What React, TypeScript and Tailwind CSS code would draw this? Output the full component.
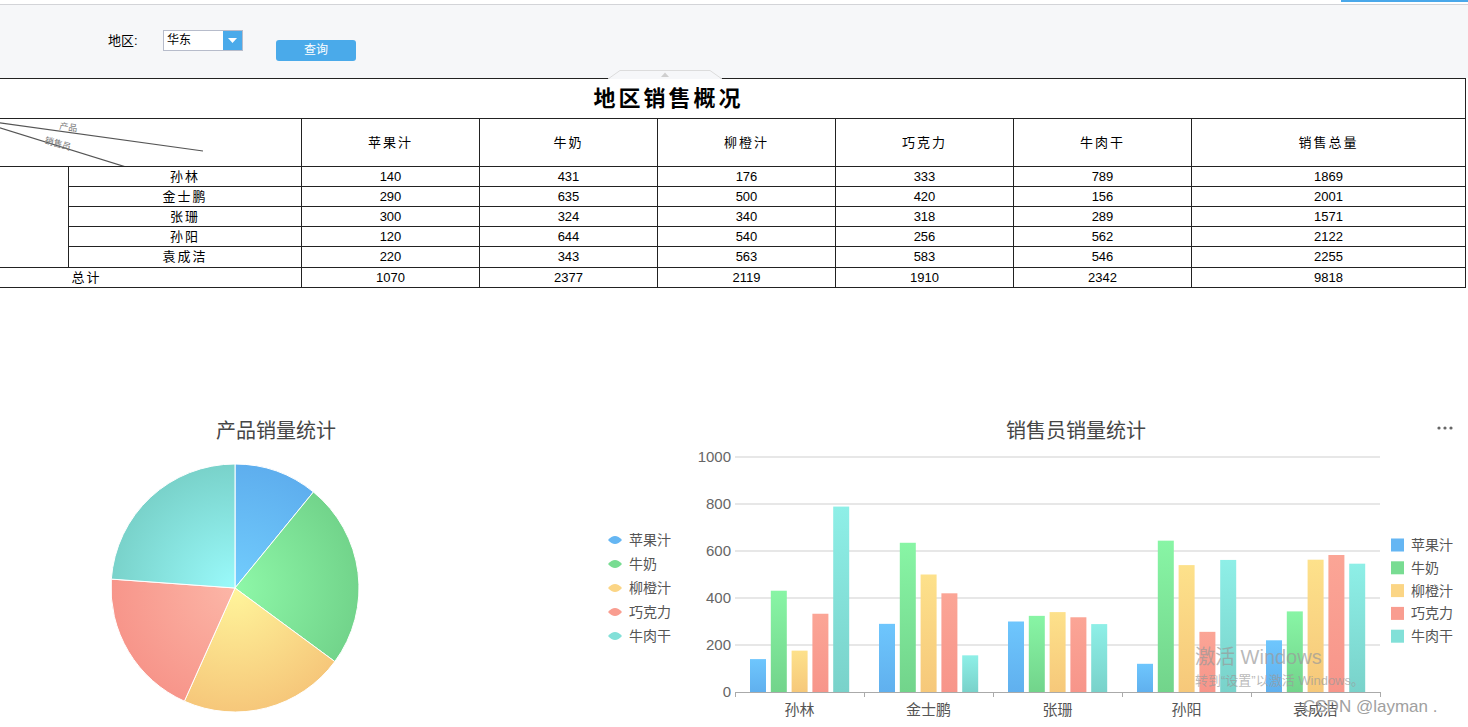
import React from 'react';

const products = ['苹果汁', '牛奶', '柳橙汁', '巧克力', '牛肉干'];
const people = [
  { name: '孙林', v: [140, 431, 176, 333, 789], total: 1869 },
  { name: '金士鹏', v: [290, 635, 500, 420, 156], total: 2001 },
  { name: '张珊', v: [300, 324, 340, 318, 289], total: 1571 },
  { name: '孙阳', v: [120, 644, 540, 256, 562], total: 2122 },
  { name: '袁成洁', v: [220, 343, 563, 583, 546], total: 2255 },
];
const totals = [1070, 2377, 2119, 1910, 2342];

// pie gradient stops: [center, edge]
const pieColors = [
  ['#72cdfd', '#5eaeee'],
  ['#8ef8a8', '#72d48b'],
  ['#fff59b', '#f6c77a'],
  ['#fcb6a7', '#f7958a'],
  ['#9afafb', '#79d2ca'],
];
// bar gradient stops: [top, bottom]
const barColors = [
  ['#6ec6fd', '#60b0ee'],
  ['#88f5a5', '#72d48b'],
  ['#fde18b', '#f6c87a'],
  ['#fba596', '#f7958a'],
  ['#8eefe7', '#79d2ca'],
];
const legendColors = ['#65b6f3', '#78dc92', '#fbd585', '#f99d90', '#82e0d8'];

const FONT = { fontFamily: '"Liberation Sans", "Noto Sans CJK SC", sans-serif' };

function FilterBar() {
  return (
    <div className="relative">
      <div className="h-[4px] bg-white" />
      <div className="h-[74px] bg-[#f6f7f9] border-t border-[#d3d4d8]">
        <div className="flex items-start pl-[108px] pt-[25px]">
          <span className="w-[55px] text-[13px] leading-[21px] text-black">地区:</span>
          <div className="flex w-[80px] h-[21px] border border-[#b7bccb] bg-white">
            <span className="flex-1 pl-[3px] text-[12px] leading-[19px] text-black">华东</span>
            <div className="w-[19px] h-full bg-[#4aaaea] flex items-center justify-center">
              <svg width="9" height="5" viewBox="0 0 9 5">
                <path d="M0 0 L9 0 L4.5 5 Z" fill="#fff" />
              </svg>
            </div>
          </div>
          <button className="ml-[33px] mt-[10px] w-[80px] h-[21px] rounded-[3px] bg-[#4aaaea] text-white text-[12px] leading-[21px]">
            查询
          </button>
        </div>
      </div>
      {/* blue progress strip */}
      <div className="absolute top-0 right-0 w-[127px] h-[2px] bg-[#4aa8ea]" />
      {/* collapse handle */}
      <svg className="absolute left-[608px] top-[69px]" width="114" height="10" viewBox="0 0 114 10">
        <path d="M0 10 L12 1.5 L102 1.5 L114 10" fill="#f6f7f9" stroke="#dcdcdc" />
        <path d="M53 8 L57 3.5 L61 8 Z" fill="#cfcfcf" />
      </svg>
    </div>
  );
}

function SalesTable() {
  const cell = 'border border-[#222] text-center text-[13px] leading-[18px] text-black p-0';
  return (
    <table className="ml-[-129px] w-[1594px] table-fixed border-collapse bg-white">
      <colgroup>
        <col className="w-[197px]" />
        <col className="w-[233px]" />
        <col className="w-[178px]" />
        <col className="w-[178px]" />
        <col className="w-[178px]" />
        <col className="w-[178px]" />
        <col className="w-[178px]" />
        <col className="w-[274px]" />
      </colgroup>
      <tbody>
        <tr className="h-[40px]">
          <td colSpan={8} className={cell + ' text-[22px] leading-[30px] font-bold tracking-[3px]'}>
            地区销售概况
          </td>
        </tr>
        <tr className="h-[48px]">
          <td colSpan={2} className={cell}>
            <div className="relative h-[47px] overflow-hidden">
              <svg className="absolute inset-0" width="430" height="47" viewBox="0 0 430 47">
                <line x1="0" y1="-14" x2="331" y2="32" stroke="#555" strokeWidth="1.2" />
                <line x1="0" y1="-31" x2="254" y2="48" stroke="#555" strokeWidth="1.2" />
                <text x="187" y="10" fontSize="9" fill="#777" transform="rotate(8 187 10)">产品</text>
                <text x="172" y="24" fontSize="9" fill="#777" transform="rotate(16 172 24)">销售员</text>
              </svg>
            </div>
          </td>
          {products.map((p) => (
            <td key={p} className={cell + ' tracking-[2px]'}>{p}</td>
          ))}
          <td className={cell + ' tracking-[2px]'}>销售总量</td>
        </tr>
        {people.map((row, i) => (
          <tr key={row.name} className={i === 4 ? 'h-[21px]' : 'h-[20px]'}>
            {i === 0 && <td rowSpan={5} className={cell} />}
            <td className={cell + ' tracking-[2px]'}>{row.name}</td>
            {row.v.map((n, j) => (
              <td key={j} className={cell}>{n}</td>
            ))}
            <td className={cell}>{row.total}</td>
          </tr>
        ))}
        <tr className="h-[20px]">
          <td colSpan={2} className={cell + ' tracking-[2px]'}>总计</td>
          {totals.map((n, j) => (
            <td key={j} className={cell}>{n}</td>
          ))}
          <td className={cell}>9818</td>
        </tr>
      </tbody>
    </table>
  );
}

function PieChart() {
  const cx = 235;
  const cy = 177;
  const r = 124;
  const sum = totals.reduce((a, b) => a + b, 0);
  let acc = 0;
  const pt = (deg: number) => {
    const rad = (deg * Math.PI) / 180;
    return [cx + r * Math.sin(rad), cy - r * Math.cos(rad)];
  };
  return (
    <svg width="680" height="317" viewBox="0 0 680 317" style={FONT}>
      <defs>
        {pieColors.map((c, i) => (
          <radialGradient key={i} id={`pg${i}`} gradientUnits="userSpaceOnUse" cx={cx} cy={cy} r={r}>
            <stop offset="0" stopColor={c[0]} />
            <stop offset="1" stopColor={c[1]} />
          </radialGradient>
        ))}
      </defs>
      <text x="276" y="27" textAnchor="middle" fontSize="20" fill="#464646">产品销量统计</text>
      {totals.map((v, i) => {
        const a0 = (acc / sum) * 360;
        acc += v;
        const a1 = (acc / sum) * 360;
        const [x0, y0] = pt(a0);
        const [x1, y1] = pt(a1);
        const large = a1 - a0 > 180 ? 1 : 0;
        return (
          <path
            key={i}
            d={`M${cx} ${cy} L${x0} ${y0} A${r} ${r} 0 ${large} 1 ${x1} ${y1} Z`}
            fill={`url(#pg${i})`}
            stroke="#fff"
            strokeWidth="1"
          />
        );
      })}
      {products.map((p, i) => {
        const y = 129 + i * 24;
        return (
          <g key={p}>
            <path d={`M608 ${y} Q615 ${y - 8} 622 ${y} Q615 ${y + 8} 608 ${y} Z`} fill={legendColors[i]} />
            <text x="629" y={y + 5} fontSize="14" fill="#555">{p}</text>
          </g>
        );
      })}
    </svg>
  );
}

function BarChart() {
  const left = 55;
  const right = 700;
  const base = 281;
  const top = 46;
  const scale = (base - top) / 1000;
  const catW = (right - left) / 5;
  const ticks = [0, 200, 400, 600, 800, 1000];
  return (
    <svg width="788" height="317" viewBox="0 0 788 317" style={FONT}>
      <defs>
        {barColors.map((c, i) => (
          <linearGradient key={i} id={`bg${i}`} x1="0" y1="0" x2="0" y2="1">
            <stop offset="0" stopColor={c[0]} />
            <stop offset="1" stopColor={c[1]} />
          </linearGradient>
        ))}
      </defs>
      <text x="396" y="27" textAnchor="middle" fontSize="20" fill="#464646">销售员销量统计</text>
      <circle cx="759" cy="17" r="1.6" fill="#666" />
      <circle cx="765" cy="17" r="1.6" fill="#666" />
      <circle cx="771" cy="17" r="1.6" fill="#666" />
      {ticks.map((t) => {
        const y = base - t * scale;
        return (
          <g key={t}>
            {t > 0 && <line x1={left} y1={y} x2={right} y2={y} stroke="#cfcfcf" />}
            <text x="51" y={y + 5} textAnchor="end" fontSize="15" fill="#666">{t}</text>
          </g>
        );
      })}
      {people.map((p, ci) => (
        <g key={p.name}>
          {p.v.map((v, bi) => {
            const h = v * scale;
            return (
              <rect
                key={bi}
                x={left + ci * catW + 15 + bi * 20.8}
                y={base - h}
                width="16"
                height={h}
                fill={`url(#bg${bi})`}
              />
            );
          })}
          <text x={left + ci * catW + catW / 2} y="304" textAnchor="middle" fontSize="15" fill="#555">
            {p.name}
          </text>
        </g>
      ))}
      <line x1={left} y1={base + 0.5} x2={right} y2={base + 0.5} stroke="#aaa" />
      {[0, 1, 2, 3, 4, 5].map((i) => (
        <line key={i} x1={left + i * catW + 0.5} y1={base} x2={left + i * catW + 0.5} y2={base + 5} stroke="#aaa" />
      ))}
      {products.map((p, i) => {
        const y = 134 + i * 22.8;
        return (
          <g key={p}>
            <rect x="711" y={y - 6.5} width="13" height="13" fill={legendColors[i]} />
            <text x="731" y={y + 5} fontSize="14" fill="#555">{p}</text>
          </g>
        );
      })}
    </svg>
  );
}

export default function App() {
  return (
    <div className="relative w-[1468px] h-[727px] overflow-hidden bg-white" style={FONT}>
      <FilterBar />
      <SalesTable />
      <div className="flex mt-[123px]">
        <PieChart />
        <BarChart />
      </div>
      {/* watermark overlay */}
      <div className="absolute left-[1195px] top-[645px] text-[20px] leading-[24px] text-[#9a9a9a]/70">激活 Windows</div>
      <div className="absolute left-[1195px] top-[673px] text-[13px] leading-[16px] text-[#9a9a9a]/70">转到“设置”以激活 Windows。</div>
      <div className="absolute left-[1303px] top-[696px] text-[17px] leading-[22px] text-[#a0a0a0]">CSDN @layman .</div>
    </div>
  );
}
